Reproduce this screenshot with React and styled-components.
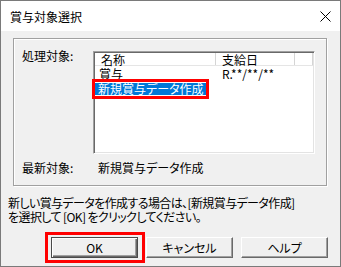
import React from 'react'
import styled, { createGlobalStyle } from 'styled-components'

const Global = createGlobalStyle`
  html, body { margin: 0; padding: 0; background: #fff; }
  body {
    font-family: "Noto Sans CJK JP", "Liberation Sans", sans-serif;
    font-size: 12px;
    color: #000;
    font-feature-settings: "palt";
  }
`

const Window = styled.div`
  width: 341px;
  height: 267px;
  box-sizing: border-box;
  border: 1px solid #7a7a7a;
  background: #f0f0f0;
  display: flex;
  flex-direction: column;
`

const TitleBar = styled.div`
  height: 30px;
  flex-shrink: 0;
  background: #fff;
  display: flex;
  align-items: center;
  justify-content: space-between;
  padding: 0 9px 0 9px;
  font-size: 12px;
`

const Client = styled.div`
  flex: 1;
  padding-top: 7px;
  display: flex;
  flex-direction: column;
`

const GroupBox = styled.div`
  margin-left: 12px;
  width: 314px;
  height: 148px;
  box-sizing: border-box;
  border: 1px solid #a0a0a0;
  box-shadow: inset 1px 1px #fff, 1px 1px #fff;
  padding: 12px 0 0 8px;
  display: grid;
  grid-template-columns: 71px 222px;
  grid-template-rows: 103px auto;
  row-gap: 9px;
`

const Label = styled.div`
  line-height: 14px;
  margin-top: -2px;
  padding-left: ${p => p.indent || 0}px;
`

const ListView = styled.div`
  box-sizing: border-box;
  height: 103px;
  background: #fff;
  border-top: 1px solid #a0a0a0;
  border-left: 1px solid #a0a0a0;
  border-right: 1px solid #fff;
  border-bottom: 1px solid #fff;
  box-shadow: inset 1px 1px #696969, inset -1px -1px #e3e3e3;
  padding: 1px;
  display: flex;
  flex-direction: column;
`

const Header = styled.div`
  display: flex;
  height: 12px;
  border-bottom: 1px solid #e5e5e5;
  background: #fff;
`

const HeadCell = styled.div`
  width: ${p => p.w}px;
  flex-shrink: 0;
  box-sizing: border-box;
  border-right: 1px solid #d5d5d5;
  padding-left: 6px;
  line-height: 13px;
  font-size: 12px;
`

const Row = styled.div`
  display: flex;
  height: 15px;
  align-items: center;
`

const Cell = styled.div`
  width: ${p => p.w}px;
  flex-shrink: 0;
  box-sizing: border-box;
  padding-left: ${p => p.pad}px;
  line-height: 12px;
`

const Selected = styled.span`
  position: relative;
  display: inline-block;
  background: #0078d7;
  color: #fff;
  height: 12px;
  line-height: 12px;
  padding: 0 2px 0 3px;
  &::after {
    content: '';
    position: absolute;
    top: -4px;
    bottom: -4px;
    left: -3px;
    right: -3px;
    border: 3px solid #ff0000;
  }
`

const Latest = styled.div`
  display: contents;
`

const Note = styled.div`
  margin-top: 10px;
  padding-left: 7px;
  line-height: 14px;
  letter-spacing: -0.6px;
`

const Buttons = styled.div`
  display: flex;
  gap: 8px;
  padding-left: 50px;
  margin-top: 13px;
`

const Button = styled.div`
  position: relative;
  width: 87px;
  height: 21px;
  box-sizing: border-box;
  background: #f0f0f0;
  display: flex;
  align-items: center;
  justify-content: center;
  border-top: 1px solid #fff;
  border-left: 1px solid #fff;
  border-right: 1px solid #696969;
  border-bottom: 1px solid #696969;
  box-shadow: inset -1px -1px #a0a0a0;
  ${p => p.primary && `
    border: 1px solid #4a4a4a;
    box-shadow: inset 1px 1px #fff, inset -1px -1px #696969, inset -2px -2px #a0a0a0;
    &::after {
      content: '';
      position: absolute;
      top: -6px;
      bottom: -6px;
      left: -7px;
      right: -8px;
      border: 3px solid #ff0000;
    }
  `}
`

const Close = () => (
  <svg width='11' height='11' viewBox='0 0 11 11'>
    <path d='M0.5 0.5 L10.5 10.5 M10.5 0.5 L0.5 10.5' stroke='#000' strokeWidth='1' />
  </svg>
)

export default function App () {
  return (
    <>
      <Global />
      <Window>
        <TitleBar>
          <span>賞与対象選択</span>
          <Close />
        </TitleBar>
        <Client>
          <GroupBox>
            <Label>処理対象:</Label>
            <ListView>
              <Header>
                <HeadCell w={121}>名称</HeadCell>
                <HeadCell w={79}>支給日</HeadCell>
                <HeadCell w={18} />
              </Header>
              <Row>
                <Cell w={121} pad={4}>賞与</Cell>
                <Cell w={79} pad={6}>R.**/**/**</Cell>
              </Row>
              <Row>
                <Cell w={121} pad={0}><Selected>新規賞与データ作成</Selected></Cell>
                <Cell w={79} pad={6} />
              </Row>
            </ListView>
            <Latest>
              <Label>最新対象:</Label>
              <Label indent={5}>新規賞与データ作成</Label>
            </Latest>
          </GroupBox>
          <Note>
            新しい賞与データを作成する場合は、[新規賞与データ作成]<br />
            を選択して [OK] をクリックしてください。
          </Note>
          <Buttons>
            <Button primary>OK</Button>
            <Button>キャンセル</Button>
            <Button>ヘルプ</Button>
          </Buttons>
        </Client>
      </Window>
    </>
  )
}
